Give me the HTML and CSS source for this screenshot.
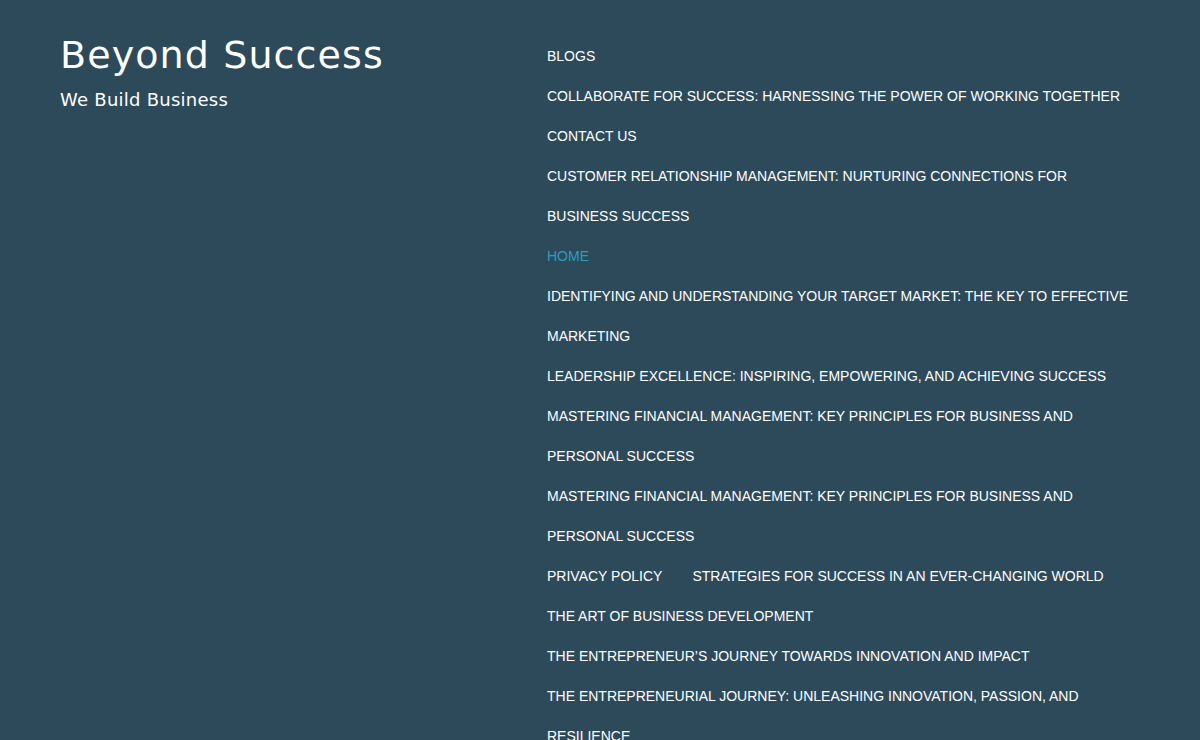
FILE: index.html
```html
<!DOCTYPE html>
<html lang="en">
<head>
<meta charset="utf-8">
<title>Beyond Success</title>
<link rel="stylesheet" href="styles.css">
</head>
<body>
<header class="site-header">
  <div class="branding">
    <h1 class="site-title">Beyond Success</h1>
    <p class="site-tagline">We Build Business</p>
  </div>
  <nav class="main-nav">
    <ul class="menu">
      <li><a href="#">BLOGS</a></li>
      <li><a href="#">COLLABORATE FOR SUCCESS: HARNESSING THE POWER OF WORKING TOGETHER</a></li>
      <li><a href="#">CONTACT US</a></li>
      <li><a href="#">CUSTOMER RELATIONSHIP MANAGEMENT: NURTURING CONNECTIONS FOR BUSINESS SUCCESS</a></li>
      <li class="current"><a href="#">HOME</a></li>
      <li><a href="#">IDENTIFYING AND UNDERSTANDING YOUR TARGET MARKET: THE KEY TO EFFECTIVE MARKETING</a></li>
      <li><a href="#">LEADERSHIP EXCELLENCE: INSPIRING, EMPOWERING, AND ACHIEVING SUCCESS</a></li>
      <li><a href="#">MASTERING FINANCIAL MANAGEMENT: KEY PRINCIPLES FOR BUSINESS AND PERSONAL SUCCESS</a></li>
      <li><a href="#">MASTERING FINANCIAL MANAGEMENT: KEY PRINCIPLES FOR BUSINESS AND PERSONAL SUCCESS</a></li>
      <li><a href="#">PRIVACY POLICY</a></li>
      <li><a href="#">STRATEGIES FOR SUCCESS IN AN EVER-CHANGING WORLD</a></li>
      <li><a href="#">THE ART OF BUSINESS DEVELOPMENT</a></li>
      <li><a href="#">THE ENTREPRENEUR’S JOURNEY TOWARDS INNOVATION AND IMPACT</a></li>
      <li><a href="#">THE ENTREPRENEURIAL JOURNEY: UNLEASHING INNOVATION, PASSION, AND RESILIENCE</a></li>
    </ul>
  </nav>
</header>
</body>
</html>
```
FILE: styles.css
```css
html, body {
  margin: 0;
  padding: 0;
  background: #2d4a5b;
}
body {
  font-family: "Liberation Sans", Arial, sans-serif;
  color: #ffffff;
}
.site-header {
  display: flex;
  padding: 0 59px 0 61px;
}
.branding {
  flex: 0 0 486px;
  padding-top: 30px;
}
.site-title {
  margin: 0 0 0 -1px;
  font-family: "DejaVu Sans", sans-serif;
  font-weight: 400;
  font-size: 38px;
  line-height: 50px;
  letter-spacing: 1.1px;
  color: #ffffff;
}
.site-tagline {
  margin: 8px 0 0 -1px;
  font-family: "DejaVu Sans", sans-serif;
  font-size: 18px;
  line-height: 24px;
  letter-spacing: 0.25px;
  color: #ffffff;
}
.main-nav {
  flex: 1;
  padding-top: 36px;
}
.menu {
  list-style: none;
  margin: 0;
  padding: 0;
  display: flex;
  flex-wrap: wrap;
  column-gap: 30px;
}
.menu li {
  font-size: 14px;
  line-height: 40px;
}
.menu a {
  color: #ffffff;
  text-decoration: none;
}
.menu .current a {
  color: #2a9dbf;
}
```
